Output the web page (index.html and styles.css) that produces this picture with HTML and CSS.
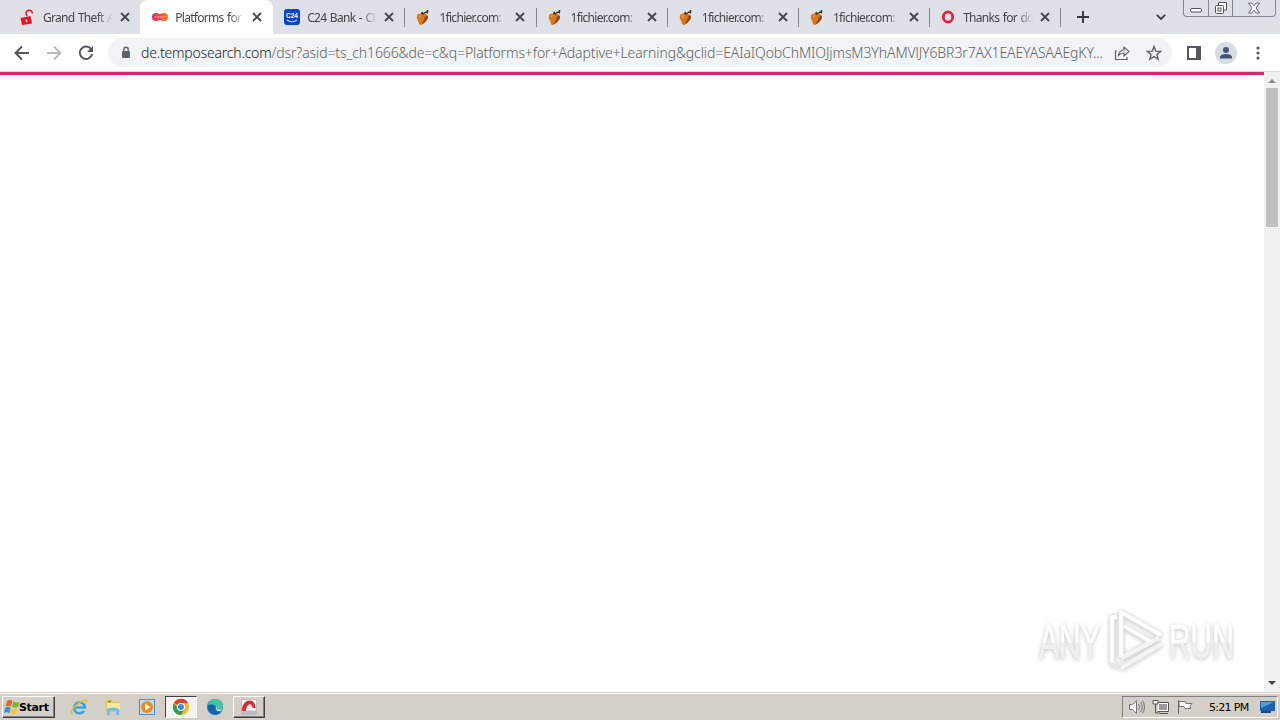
FILE: index.html
```html
<!DOCTYPE html>
<html lang="en">
<head>
    <meta charset="UTF-8">
    <title>Platforms for Adaptive Learning</title>
    <link rel="stylesheet" href="styles.css">
</head>
<body>
    <svg class="defs" width="0" height="0">
        <symbol id="close" viewBox="0 0 10 10"><path d="M1 1l8 8M9 1L1 9" stroke="#45494d" stroke-width="1.9"/></symbol>
        <symbol id="fruit" viewBox="0 0 16 16">
            <path d="M2 6q2-2 4-1 4-1 6 1 1 3-2 6-3 4-5 4-1-1-2-4-2-3-1-6z" fill="#d97818"/>
            <path d="M12 6q2 2 0 5-3 4-6 5 3-4 4-8z" fill="#8d4812"/>
            <path d="M3.500 7l3-1-1.500 3z" fill="#f5a13c"/>
            <path d="M6 4l2 1 3-2 2 1M12.500 1v2M7 3.500h1" fill="none" stroke="#3c3020" stroke-width="1.500"/>
        </symbol>
    </svg>

    <div class="tabstrip">
        <div class="tabs">
            <div class="tab">
                <svg class="favicon" viewBox="0 0 16 16"><path d="M.5 9l10-2 1.500 7.500L2 16z" fill="#f0101c"/><path d="M7 7L6 4.500Q6 1.500 9 1.200Q12 1 12.500 4.500" fill="none" stroke="#e02030" stroke-width="1.600"/><path d="M5.500 10.500l1.500-.3.500 2.800-1.500.2z" fill="#fff"/></svg>
                <span class="title">Grand Theft A</span>
                <svg class="close"><use href="#close"/></svg>
            </div>
            <div class="tab active">
                <svg class="favicon" viewBox="0 0 16 16"><defs><linearGradient id="tempo"><stop offset="0" stop-color="#e8206c"/><stop offset="1" stop-color="#ff7a1c"/></linearGradient></defs><path d="M4 4Q6 4 8 5Q10 4 12 4A4 4 0 0 1 12 12Q10 12 8 11Q6 12 4 12A4 4 0 0 1 4 4z" fill="url(#tempo)"/><path d="M2.500 8h11" stroke="#ffb0b0" stroke-width="1.200" stroke-dasharray="2 .5"/></svg>
                <span class="title">Platforms for A</span>
                <svg class="close"><use href="#close"/></svg>
            </div>
            <div class="tab">
                <svg class="favicon" viewBox="0 0 16 16"><rect width="16" height="16" rx="3" fill="#0b43cf"/><text x="8" y="8.800" text-anchor="middle" class="c24">C24</text><path d="M3 11Q8 14.500 13 11" fill="none" stroke="#b8ccff" stroke-width="1.200"/></svg>
                <span class="title">C24 Bank - CH</span>
                <svg class="close"><use href="#close"/></svg>
            </div>
            <div class="tab fichier">
                <svg class="favicon"><use href="#fruit"/></svg>
                <span class="title">1fichier.com: C</span>
                <svg class="close"><use href="#close"/></svg>
            </div>
            <div class="tab fichier">
                <svg class="favicon"><use href="#fruit"/></svg>
                <span class="title">1fichier.com: C</span>
                <svg class="close"><use href="#close"/></svg>
            </div>
            <div class="tab fichier">
                <svg class="favicon"><use href="#fruit"/></svg>
                <span class="title">1fichier.com: C</span>
                <svg class="close"><use href="#close"/></svg>
            </div>
            <div class="tab fichier">
                <svg class="favicon"><use href="#fruit"/></svg>
                <span class="title">1fichier.com: C</span>
                <svg class="close"><use href="#close"/></svg>
            </div>
            <div class="tab">
                <svg class="favicon" viewBox="0 0 16 16"><ellipse cx="8" cy="8" rx="4.700" ry="5.200" fill="none" stroke="#e8233f" stroke-width="2.800"/></svg>
                <span class="title">Thanks for do</span>
                <svg class="close"><use href="#close"/></svg>
            </div>
        </div>
        <svg class="new-tab" viewBox="0 0 12 12"><path d="M6 0v12M0 6h12" stroke="#35383c" stroke-width="1.900"/></svg>
        <svg class="tab-search" viewBox="0 0 10 6"><path d="M.8.8L5 5 9.200.8" fill="none" stroke="#3c4043" stroke-width="1.800"/></svg>
        <div class="window-buttons">
            <span><svg width="14" height="16"><rect x="1.500" y="8.500" width="11" height="3.500" rx="1.500" fill="#fff" stroke="#4d5464"/></svg></span>
            <span><svg width="14" height="16"><path d="M4.500 5V2.500h8V10H10" fill="#fff" stroke="#4d5464"/><rect x="1.500" y="5.500" width="8" height="8" rx="1" fill="#fff" stroke="#4d5464"/><rect x="4" y="8" width="3" height="3" fill="none" stroke="#4d5464"/></svg></span>
            <span><svg width="14" height="16"><path d="M1.500 3h3.200L7 5.800 9.300 3h3.200L9 8l3.500 5H9.300L7 10.200 4.700 13H1.500L5 8z" fill="#fff" stroke="#4d5464" stroke-width=".9"/></svg></span>
        </div>
    </div>

    <div class="toolbar">
        <svg class="nav" viewBox="0 0 16 16"><path d="M15 8H2.500M8 1.500L1.500 8 8 14.500" fill="none" stroke="#54585c" stroke-width="1.900"/></svg>
        <svg class="nav" viewBox="0 0 16 16"><path d="M1 8h12.500M8 1.500L14.500 8 8 14.500" fill="none" stroke="#babcbe" stroke-width="1.900"/></svg>
        <svg class="nav" viewBox="0 0 16 16"><path d="M13 4A6.200 6.200 0 1 0 14.100 9" fill="none" stroke="#54585c" stroke-width="2"/><path d="M15 1v6H9z" fill="#54585c"/></svg>
        <div class="omnibox">
            <svg class="lock" viewBox="0 0 10 13"><rect x="1" y="5" width="8" height="7" rx="1" fill="#5f6368"/><path d="M2.800 6V3.500a2.200 2.200 0 0 1 4.400 0V6" fill="none" stroke="#5f6368" stroke-width="1.400"/></svg>
            <div class="url"><span class="host">de.temposearch.com</span><span class="path">/dsr?asid=ts_ch1666&amp;de=c&amp;q=Platforms+for+Adaptive+Learning&amp;gclid=EAIaIQobChMIOJjmsM3YhAMVlJY6BR3r7AX1EAEYASAAEgKY...</span></div>
            <svg class="share" viewBox="0 0 16 16"><path d="M3 6H1.500v8.500H13V12M4.500 10.500Q5 5.500 10 5V2l5 4.500L10 11V8Q6.500 8 4.500 10.500z" fill="none" stroke="#5f6368" stroke-width="1.200"/></svg>
            <svg class="star" viewBox="0 0 16 16"><path d="M8 1.500l1.800 4.600 4.900.3-3.800 3.100 1.300 4.800L8 11.600l-4.200 2.700 1.300-4.800L1.300 6.400l4.900-.3z" fill="none" stroke="#5f6368" stroke-width="1.400"/></svg>
        </div>
        <svg class="panel" viewBox="0 0 14 14"><path d="M1 1h12v12H1z" fill="none" stroke="#54585c" stroke-width="2"/><path d="M9 1h4v12H9z" fill="#54585c"/></svg>
        <div class="avatar"><svg width="14" height="14"><circle cx="7" cy="4" r="3" fill="#465578"/><path d="M1 12.500V11Q1.500 8 7 8t6 3v1.500z" fill="#465578"/></svg></div>
        <svg class="menu" viewBox="0 0 4 14"><circle cx="2" cy="2" r="1.600"/><circle cx="2" cy="7" r="1.600"/><circle cx="2" cy="12" r="1.600"/></svg>
    </div>

    <div class="viewport">
        <div class="page"></div>
        <div class="scrollbar">
            <svg width="8" height="4"><path d="M0 4l4-4 4 4z" fill="#8c8c8c"/></svg>
            <div class="thumb"></div>
            <svg class="down" width="8" height="4"><path d="M0 0l4 4 4-4z" fill="#404040"/></svg>
        </div>
        <div class="watermark">
            <span>ANY</span>
            <svg width="58" height="66" viewBox="0 0 58 66">
                <g fill="none" stroke="#e9e9e9" stroke-width="5.500" stroke-linejoin="round"><path d="M10 9H5v46l6 3"/><path d="M14 4v45M14 4l40 23M17 18l29 17"/><path d="M14 50l38-20M14 60l40-24"/></g>
                <g fill="none" stroke="#fff" stroke-width="3.500" stroke-linejoin="round"><path d="M10 9H5v46"/><path d="M14 49V4l40 23M17 18l29 17"/></g>
                <g fill="none" stroke="#f4f4f4" stroke-width="3.500"><path d="M14 50l38-20M14 60l40-24"/></g>
            </svg>
            <span>RUN</span>
        </div>
    </div>

    <div class="taskbar">
        <div class="start">
            <svg width="17" height="16" viewBox="0 0 17 16"><path d="M3 2q3-2 5.500 0L7 7.500Q4 6 1.500 7.500z" fill="#ee6424"/><path d="M9.500 2.500q3 2 6 .3L14 8q-3 1.500-6-.3z" fill="#75b82b"/><path d="M1.300 8.500Q4 7 6.700 8.500L5.200 14Q2.500 12.500 0 14z" fill="#3d91db"/><path d="M7.600 9q3 1.800 6 .2L12 14.500q-3 1.500-5.800-.4z" fill="#fbc528"/></svg>
            <span>Start</span>
        </div>
        <div class="launch">
            <div class="task"><svg viewBox="0 0 18 18"><path d="M14 13A5.500 5.500 0 1 1 15 9.500H5" fill="none" stroke="#35a6e0" stroke-width="2.600"/><path d="M3 15.500Q0 17 2 12Q8 4 15 2q3 0 1 3" fill="none" stroke="#e7b93b" stroke-width="1.500"/></svg></div>
            <div class="task"><svg viewBox="0 0 18 18"><path d="M2 2h6l1 2h7v10H2z" fill="#e9c55c"/><path d="M3 5h13v7H3z" fill="#f8e7a0"/><path d="M3 17v-6q6-3 12 0v6h-3v-4H6v4z" fill="#76bddd"/><path d="M4 3.500h3" stroke="#53a449" stroke-width="1.500"/></svg></div>
            <div class="task"><svg viewBox="0 0 18 18"><rect x="1.500" y="1.500" width="15" height="15" fill="#bcdcf2" stroke="#4b8dbc"/><circle cx="9" cy="9" r="6" fill="#f18a17"/><path d="M7 5.500v7L12.500 9z" fill="#fff"/></svg></div>
            <div class="task pressed"><svg viewBox="0 0 18 18"><circle cx="9" cy="9" r="8" fill="#f3bd18"/><path d="M9 9L2 5A8 8 0 0 1 16 5H9z" fill="#dd4034"/><path d="M2 5A8 8 0 0 0 9 17l3.500-6H6z" fill="#329c50"/><circle cx="9" cy="9" r="4" fill="#fff"/><circle cx="9" cy="9" r="3" fill="#4285e8"/></svg></div>
            <div class="task"><svg viewBox="0 0 18 18"><circle cx="9" cy="9" r="8" fill="#1877c9"/><path d="M1.500 7Q4 1 9 1q8 0 8 7 0 4-5 4-3 0-2-3Q9 5 1.500 7z" fill="#40c5a5"/><path d="M2 8q5-3 7 1-2 5 6 5-4 4-8 2Q2 14 2 8z" fill="#1461ae"/><path d="M10 9q1-1 1-1-2 5 5 3l-1 2q-6 1-5-4z" fill="#d4d0c8"/></svg></div>
            <div class="task raised"><svg viewBox="0 0 18 18"><path d="M1.500 1.500h15v15h-15z" fill="#f4f4f4" stroke="#bbb"/><path d="M2 13Q2 3 10 2.500q5 0 5.500 7.500h-3Q12 5.500 9 6.500q-3 1-3 6.500z" fill="#df2432"/><path d="M6 12.500h10V16H2v-2z" fill="#b9bcc0"/></svg></div>
        </div>
        <div class="tray">
            <svg width="18" height="16" viewBox="0 0 18 16"><path d="M1.500 5.500h3l4-4v13l-4-4h-3z" fill="#fff" stroke="#777"/><path d="M10.500 5q2 3 0 6M12.500 3q3.500 5 0 10M14.500 1.500q4 6.500 0 13" fill="none" stroke="#777"/></svg>
            <svg width="18" height="16" viewBox="0 0 18 16"><rect x="6.500" y="4.500" width="9" height="7" fill="#999" stroke="#fff"/><path d="M6 3.500h10.500v9H5.500M8 14.500h8" fill="none" stroke="#555"/><path d="M1 1.500h5V5H1z" fill="#fff" stroke="#555"/><path d="M3.500 5v9H8" fill="none" stroke="#555"/></svg>
            <svg width="18" height="16" viewBox="0 0 18 16"><path d="M3 2.500h6l1 2h6l-2 3 1 2H9l-1-2H3z" fill="#fff" stroke="#777"/><path d="M2.500 1v14" stroke="#666"/></svg>
            <span class="clock">5:21 PM</span>
            <svg width="16" height="14" viewBox="0 0 16 14"><path d="M0 1h15v10H0z" fill="#1c5fae"/><path d="M1 2h13L1 8z" fill="#579ddc"/><path d="M1 12h10" stroke="#29466d" stroke-width="2"/></svg>
        </div>
    </div>
</body>
</html>
```

FILE: styles.css
```css
* { box-sizing: border-box; }
body { margin: 0; width: 1280px; height: 720px; overflow: hidden; display: flex; flex-direction: column; background-color: #fff; font-family: "Noto Sans", sans-serif; font-size: 12px; }
svg { display: block; flex: none; }
.defs { position: absolute; }

.tabstrip { height: 34px; flex: none; display: flex; align-items: flex-start; background-color: #dee1e8; padding-left: 9px; }
.tabs { display: flex; width: 1052px; flex: none; }
.tab { width: 131.2px; height: 34px; flex: none; display: flex; align-items: center; padding-left: 12px; position: relative; }
.tab::after { content: ""; position: absolute; right: -2px; top: 8px; width: 1px; height: 19px; background-color: #85888e; }
.tab:first-child { padding-left: 11px; }
.tab:first-child::after, .tab.active::after { display: none; }
.tab.active { background-color: #fff; border-radius: 8px 8px 0 0; width: 133px; }
.tab.active + .tab { margin-left: -1px; }
.favicon { width: 16px; height: 16px; }
.c24 { font: bold 6.5px "Liberation Sans", sans-serif; fill: #fff; }
.title { width: 70px; margin-left: 7px; white-space: nowrap; color: #42464a; font-size: 12px; letter-spacing: -0.7px; word-spacing: 1px; -webkit-mask-image: linear-gradient(to right, #000 54px, transparent 70px); }
.fichier .title { margin-left: 8px; width: 69px; -webkit-mask-image: linear-gradient(to right, #000 56px, transparent 65px); }
.close { width: 10px; height: 10px; margin-left: 7px; }
.new-tab { width: 12px; height: 12px; margin: 11px 0 0 16px; }
.tab-search { width: 10px; height: 6px; margin: 14px 0 0 67px; }
.window-buttons { display: flex; width: 93px; height: 17px; margin-left: 17px; border: 1px solid #858995; border-top: 0; border-radius: 0 0 4px 4px; }
.window-buttons span { width: 25px; display: flex; justify-content: center; border-right: 1px solid #858995; }
.window-buttons span:last-child { width: 42px; border: 0; }

.toolbar { height: 38px; flex: none; display: flex; align-items: center; padding-left: 14px; border-bottom: 1px solid #d5d7da; }
.nav { width: 16px; height: 16px; margin-right: 16px; }
.omnibox { width: 1064px; height: 29px; margin-left: -2px; border-radius: 15px; background-color: #f1f3f4; display: flex; align-items: center; padding-left: 13px; }
.lock { width: 10px; height: 13px; }
.url { width: 966px; margin-left: 10px; white-space: nowrap; font-size: 14px; font-weight: 300; color: #5f6368; }
.host { color: #202124; letter-spacing: -0.2px; }
.path { letter-spacing: -0.11px; }
.share { width: 16px; height: 16px; margin-left: 7px; }
.star { width: 16px; height: 16px; margin-left: 16px; }
.panel { width: 14px; height: 14px; margin-left: 15px; }
.avatar { width: 22px; height: 22px; margin-left: 14px; border-radius: 50%; background-color: #d7dce3; display: flex; align-items: center; justify-content: center; }
.menu { width: 4px; height: 14px; margin-left: 19px; fill: #54585c; }

.viewport { height: 620px; flex: none; display: flex; position: relative; }
.page { flex: 1; border-top: 3px solid #d8256c; }
.scrollbar { width: 16px; background-color: #f1f1f1; display: flex; flex-direction: column; align-items: center; padding-top: 7px; }
.thumb { width: 12px; height: 139px; margin-top: 5px; background-color: #c1c1c1; }
.down { margin: auto 0 7px; }
.watermark { position: absolute; left: 1039px; top: 535px; display: flex; align-items: center; filter: drop-shadow(0 1px 2px #c4c4c4); }
.watermark span { width: 110px; margin-right: -46px; font: 49px/68px "Liberation Sans", sans-serif; white-space: nowrap; transform: scaleX(0.61); transform-origin: left; color: transparent; -webkit-text-stroke: 1px transparent; background-image: linear-gradient(#fff 52%, #f0f0f0 53%); -webkit-background-clip: text; background-clip: text; }
.watermark svg { margin: 0 4px; }

.taskbar { height: 28px; flex: none; display: flex; align-items: center; background-color: #d4d0c8; border-top: 1px solid #d4d0c8; box-shadow: inset 0 1px #fff; padding: 2px 2px 1px; }
.start { width: 53px; height: 22px; display: flex; align-items: center; padding-left: 1px; border: 1px solid; border-color: #fff #404040 #404040 #fff; box-shadow: inset -1px -1px #808080; font: bold 11px "DejaVu Sans", sans-serif; letter-spacing: -0.35px; color: #000; }
.start span { margin-left: -2px; }
.launch { display: flex; margin-left: 8px; gap: 2px; }
.task { width: 32px; height: 22px; display: flex; align-items: center; justify-content: center; }
.task svg { width: 18px; height: 18px; }
.pressed { background-color: #f5f3f0; border: 1px solid; border-color: #404040 #fff #fff #404040; }
.raised { border: 1px solid; border-color: #fff #404040 #404040 #fff; box-shadow: inset -1px -1px #808080; }
.tray { width: 156px; height: 22px; margin-left: auto; display: flex; align-items: center; gap: 6px; padding-left: 5px; border: 1px solid; border-color: #808080 #fff #fff #808080; }
.clock { width: 45px; margin-left: 9px; font: 11px "DejaVu Sans", sans-serif; letter-spacing: -0.7px; color: #000; white-space: nowrap; }
```
